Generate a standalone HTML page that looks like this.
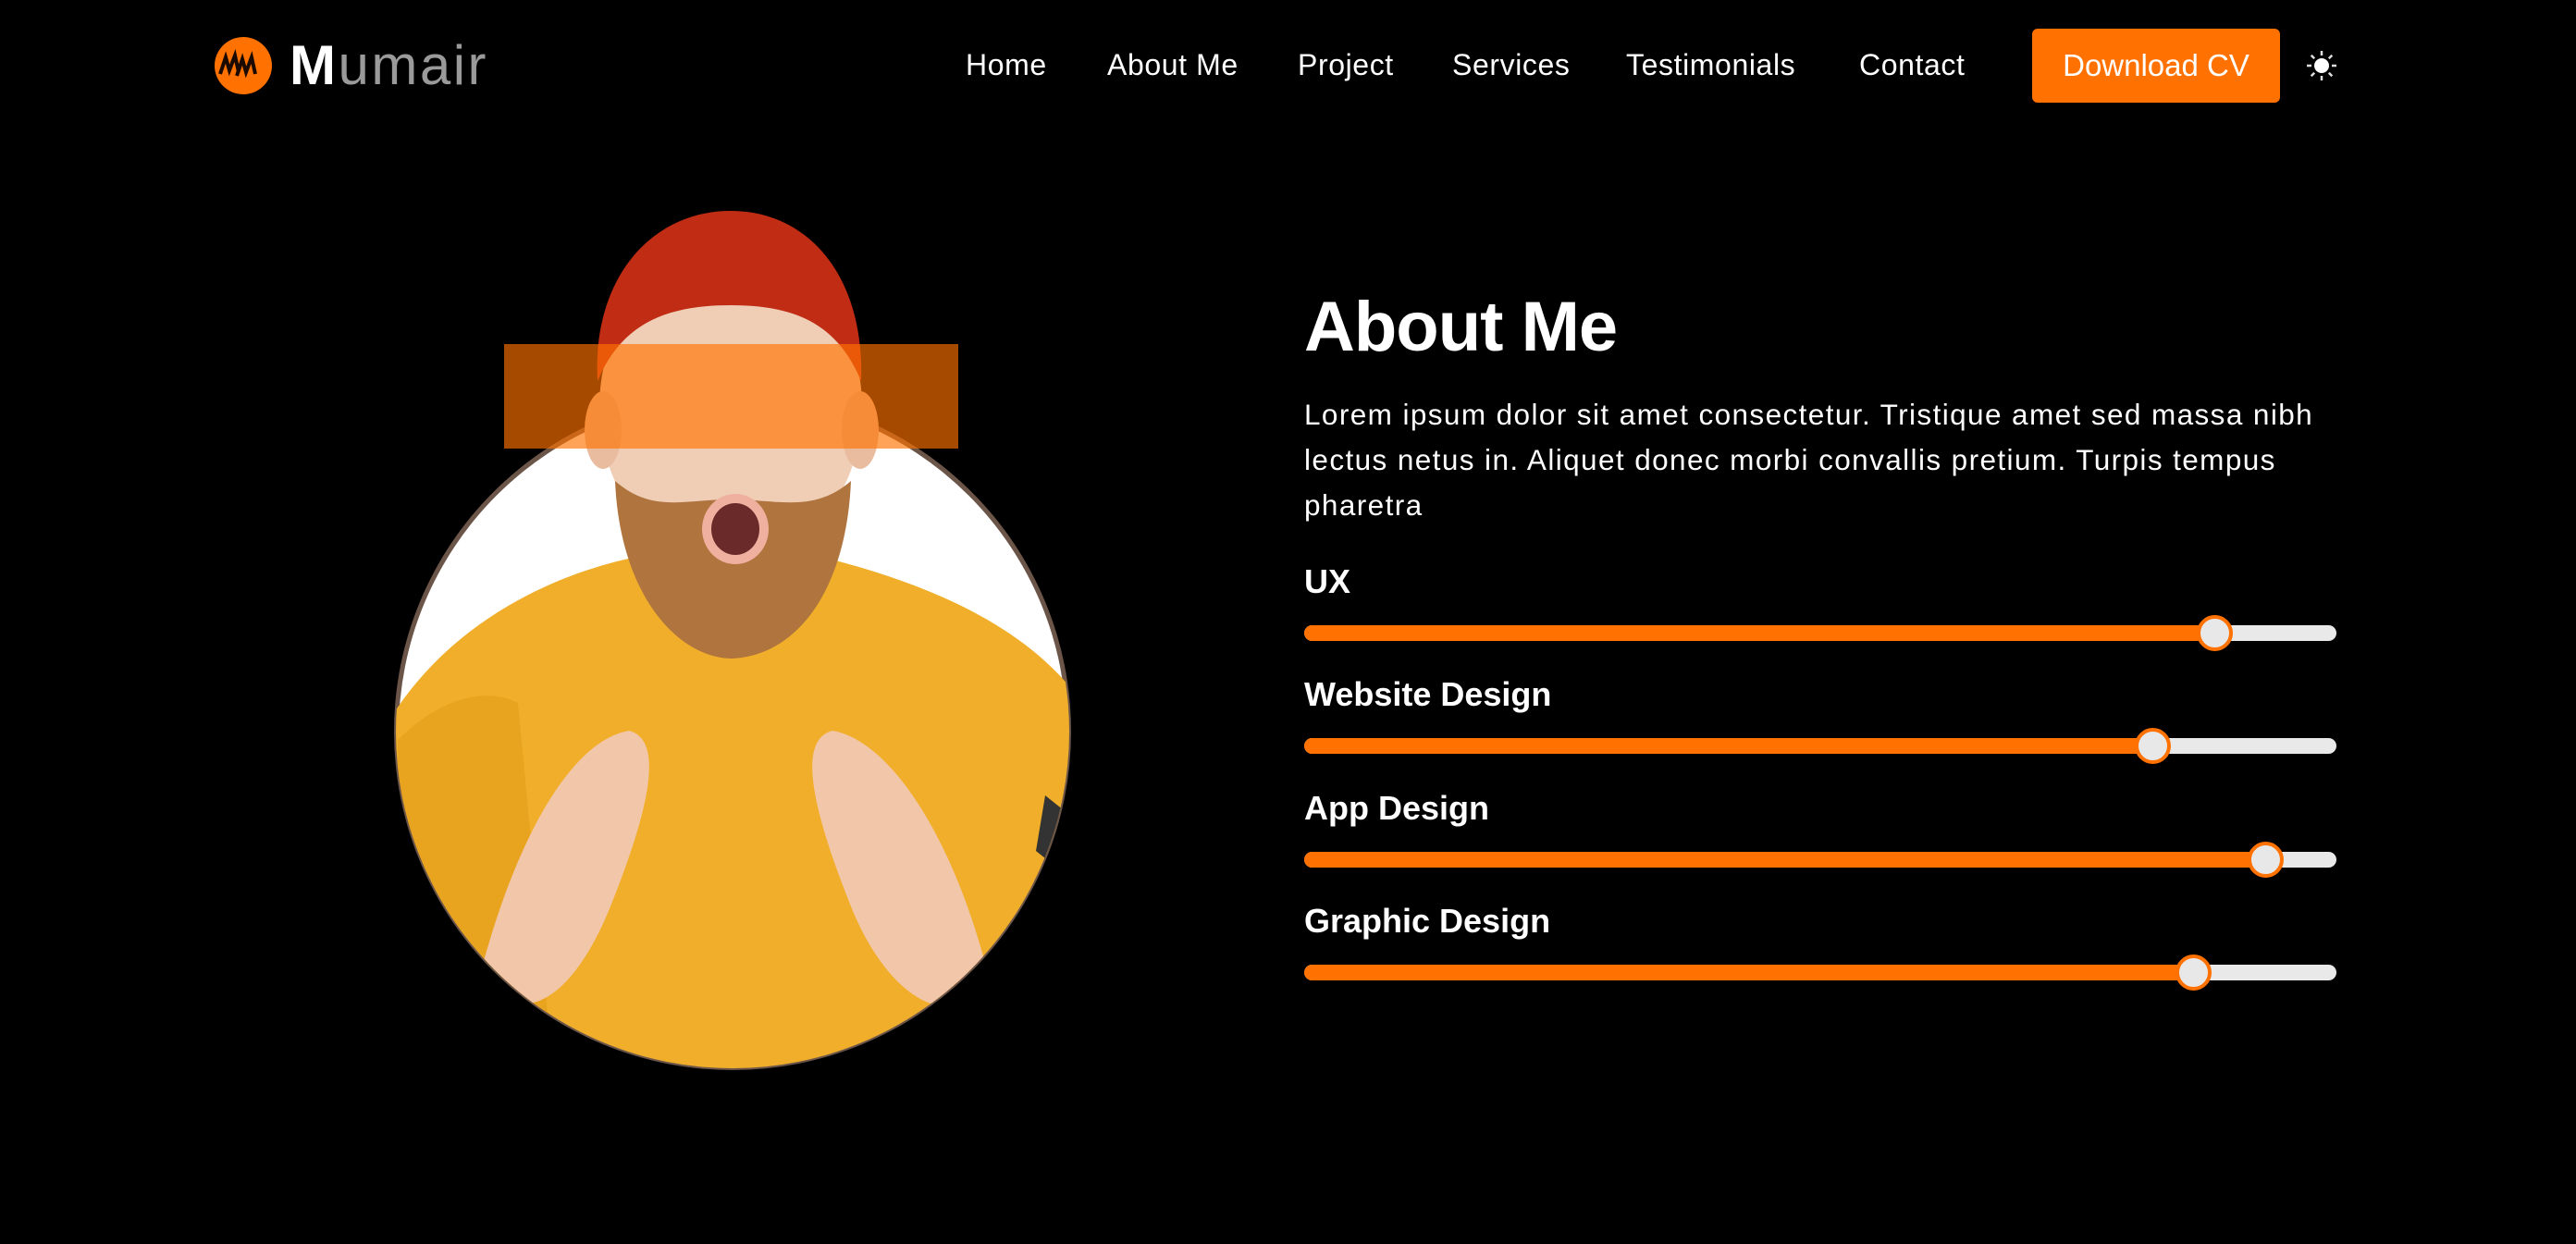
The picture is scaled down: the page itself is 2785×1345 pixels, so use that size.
<!DOCTYPE html>
<html><head><meta charset="utf-8"><style>
*{margin:0;padding:0;box-sizing:border-box}
html,body{width:2785px;height:1345px;background:#000;overflow:hidden;font-family:"Liberation Sans",sans-serif;color:#fff}
.abs{position:absolute}
.nav a{position:absolute;top:50px;font-size:32px;color:#fff;text-decoration:none;white-space:nowrap;line-height:40px;letter-spacing:0.6px}
.btn{left:2197px;top:31px;width:268px;height:80px;background:#ff7100;border-radius:6px;font-size:33px;line-height:80px;text-align:center}
h1{position:absolute;left:1410px;top:310px;font-size:76px;font-weight:bold;letter-spacing:-1px}
.p{left:1410px;top:424px;font-size:31.5px;line-height:49px;white-space:nowrap;letter-spacing:1.4px}
.lab{left:1410px;font-size:36px;font-weight:bold;white-space:nowrap}
.bar{left:1410px;width:1116px;height:17px;border-radius:9px;background:#e9e9e9;overflow:visible}
.fill{position:absolute;left:0;top:0;height:17px;border-radius:9px;background:#ff7100}
.th{position:absolute;top:-11px;width:39px;height:39px;border-radius:50%;background:#e8e8e8;border:4px solid #ff7100;margin-left:-19px}
</style></head><body>
<svg class="abs" style="left:0;top:0" width="1300" height="1345" viewBox="0 0 1300 1345">
<defs><clipPath id="c"><circle cx="792" cy="791" r="364"/></clipPath></defs>
<circle cx="263" cy="71" r="31" fill="#ff7100"/>
<path d="M238 80 l6 -18 l4 14 l6 -16 l4 18 M256 82 l6 -18 l4 14 l6 -16 l4 18" stroke="#1a0a00" stroke-width="4" fill="none"/>
<circle cx="792" cy="791" r="366" fill="#6b5548"/>
<circle cx="792" cy="791" r="361" fill="#fff"/>
<g clip-path="url(#c)">
<path d="M420 780 C500 650 640 610 700 600 L880 600 C960 620 1100 660 1170 760 L1170 1200 L420 1200Z" fill="#f0ae2a"/>
<path d="M430 800 C470 760 520 740 560 760 L600 1180 L430 1180Z" fill="#e9a41f"/>
<path d="M520 1050 C560 900 620 800 680 790 C720 800 700 880 660 980 C620 1080 560 1120 520 1050Z" fill="#f2c6a8"/>
<path d="M1070 1060 C1030 900 960 800 900 790 C860 800 880 880 920 980 C960 1080 1030 1120 1070 1060Z" fill="#f2c6a8"/>
<path d="M1130 860 l25 20 l-10 60 l-25 -20Z" fill="#333"/>
</g>
<path d="M700 560 L880 560 L880 650 C840 690 740 690 700 650Z" fill="#e7b595"/>
<ellipse cx="790" cy="440" rx="142" ry="170" fill="#f0cdb5"/>
<ellipse cx="652" cy="465" rx="20" ry="42" fill="#e9bca0"/>
<ellipse cx="930" cy="465" rx="20" ry="42" fill="#e9bca0"/>
<path d="M665 520 C670 640 730 710 790 712 C860 710 915 640 920 520 C880 555 840 540 790 540 C740 540 705 555 665 520Z" fill="#b0743e"/>
<ellipse cx="795" cy="572" rx="36" ry="38" fill="#f0b0a0"/>
<ellipse cx="795" cy="572" rx="26" ry="28" fill="#6b2a2a"/>
<path d="M646 412 C640 300 705 228 790 228 C875 228 935 300 931 412 C905 350 860 330 790 330 C720 330 672 350 646 412Z" fill="#c02c14"/>
<rect x="545" y="372" width="491" height="113" fill="#ff7100" fill-opacity="0.65"/>
</svg>
<div class="abs" style="left:313px;top:36px;font-size:60px;line-height:70px;letter-spacing:2.5px"><b style="color:#fff">M</b><span style="color:#9a9a9a">umair</span></div>
<div class="nav">
<a style="left:1044px">Home</a>
<a style="left:1197px">About Me</a>
<a style="left:1403px">Project</a>
<a style="left:1570px">Services</a>
<a style="left:1758px">Testimonials</a>
<a style="left:2010px">Contact</a>
</div>
<div class="abs btn">Download CV</div>
<svg class="abs" style="left:2493px;top:54px" width="34" height="34" viewBox="0 0 34 34">
<circle cx="17" cy="17" r="8" fill="#fff"/>
<g stroke="#ddd" stroke-width="2.5"><path d="M17 1v5M17 28v5M1 17h5M28 17h5M5.7 5.7l3.5 3.5M24.8 24.8l3.5 3.5M5.7 28.3l3.5-3.5M24.8 9.2l3.5-3.5"/></g>
</svg>
<h1>About Me</h1>
<div class="abs p">Lorem ipsum dolor sit amet consectetur. Tristique amet sed massa nibh<br>lectus netus in. Aliquet donec morbi convallis pretium. Turpis tempus<br>pharetra</div>
<div class="abs lab" style="top:608px">UX</div>
<div class="abs bar" style="top:676px"><div class="fill" style="width:984px"></div><div class="th" style="left:984px"></div></div>
<div class="abs lab" style="top:730px">Website Design</div>
<div class="abs bar" style="top:798px"><div class="fill" style="width:917px"></div><div class="th" style="left:917px"></div></div>
<div class="abs lab" style="top:853px">App Design</div>
<div class="abs bar" style="top:921px"><div class="fill" style="width:1039px"></div><div class="th" style="left:1039px"></div></div>
<div class="abs lab" style="top:975px">Graphic Design</div>
<div class="abs bar" style="top:1043px"><div class="fill" style="width:961px"></div><div class="th" style="left:961px"></div></div>
</body></html>
